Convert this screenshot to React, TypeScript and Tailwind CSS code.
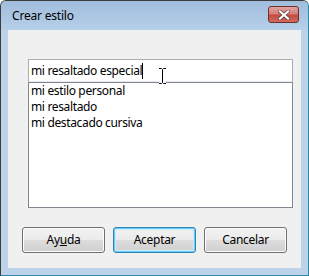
import React from 'react';

const font = { fontFamily: '"Segoe UI", "Noto Sans", "Open Sans", sans-serif' };

const WinButton: React.FC<{ children: React.ReactNode; primary?: boolean }> = ({ children, primary }) => (
  <button
    className={
      'relative w-[83px] h-[26px] rounded-[3px] border text-[12px] tracking-[-0.3px] text-black flex items-center justify-center bg-[linear-gradient(#f2f2f2_0%,#ebebeb_50%,#dddddd_50%,#cfcfcf_100%)] ' +
      (primary
        ? 'border-[#3c7fb1] shadow-[inset_0_0_0_1px_#5fd0f5,inset_0_0_0_2px_#c8ecfb]'
        : 'border-[#707070] shadow-[inset_0_0_0_1px_#fcfcfc]')
    }
  >
    {children}
  </button>
);

export default function App() {
  const items = ['mi estilo personal', 'mi resaltado', 'mi destacado cursiva'];
  return (
    <div className="w-[309px] h-[276px] bg-white" style={font}>
      <div className="w-full h-full flex flex-col rounded-t-[6px] border border-[#3c3c3c] border-r-[#2a8aa6] border-b-[#2a8aa6] bg-[#bcd3ea]">
        {/* title bar */}
        <div className="h-[29px] flex items-center justify-between pl-[11px] pr-[9px] rounded-t-[5px] bg-[linear-gradient(#a0bddc,#b6cfe9)]">
          <span className="text-[12px] tracking-[-0.2px] text-black">Crear estilo</span>
          <div className="w-[31px] h-[17px] mt-[-2px] rounded-[3px] border border-[#6d2f2b] flex items-center justify-center bg-[linear-gradient(#e2a5a0_0%,#d57f78_45%,#c44a40_55%,#d06b5f_100%)]">
            <svg width="12" height="10" viewBox="0 0 12 10">
              <path d="M2 1.5 L10 8.5 M10 1.5 L2 8.5" stroke="#5a3a38" strokeWidth="3.6" strokeLinecap="square" />
              <path d="M2 1.5 L10 8.5 M10 1.5 L2 8.5" stroke="#ffffff" strokeWidth="2.2" strokeLinecap="square" />
            </svg>
          </div>
        </div>

        {/* client area */}
        <div className="mx-[7px] h-[238px] bg-[#f0f0f0] flex flex-col pt-[29px]">
          <div className="relative ml-[20px] mr-[8px]">
            <div className="h-[23px] bg-white border border-[#abadb3] border-b-[#e3e9ef] flex items-center pl-[2px] text-[12px] tracking-[-0.35px] text-black">
              <span>mi resaltado especial</span>
              <span className="w-px h-[16px] bg-black"></span>
            </div>
            <div className="h-[126px] bg-white border border-[#828790] flex flex-col pl-[2px] text-[12px] tracking-[-0.35px] text-black">
              {items.map((it) => (
                <div key={it} className="h-[16px] leading-[16px]">{it}</div>
              ))}
            </div>
            {/* I-beam mouse cursor */}
            <svg className="absolute left-[130px] top-[8px]" width="9" height="18" viewBox="0 0 9 18">
              <path d="M1 1.5 H3.5 L4.5 2.5 L5.5 1.5 H8 M4.5 2.5 V15.5 M1 16.5 H3.5 L4.5 15.5 L5.5 16.5 H8" stroke="#ffffff" strokeWidth="3" fill="none" />
              <path d="M1 1.5 H3.5 L4.5 2.5 L5.5 1.5 H8 M4.5 2.5 V15.5 M1 16.5 H3.5 L4.5 15.5 L5.5 16.5 H8" stroke="#000000" strokeWidth="1" fill="none" />
            </svg>
          </div>

          <div className="mt-[19px] mx-[14px] flex justify-between">
            <WinButton>
              <span>
                Ay<span className="underline">u</span>da
              </span>
            </WinButton>
            <WinButton primary>Aceptar</WinButton>
            <WinButton>Cancelar</WinButton>
          </div>
        </div>
      </div>
    </div>
  );
}
